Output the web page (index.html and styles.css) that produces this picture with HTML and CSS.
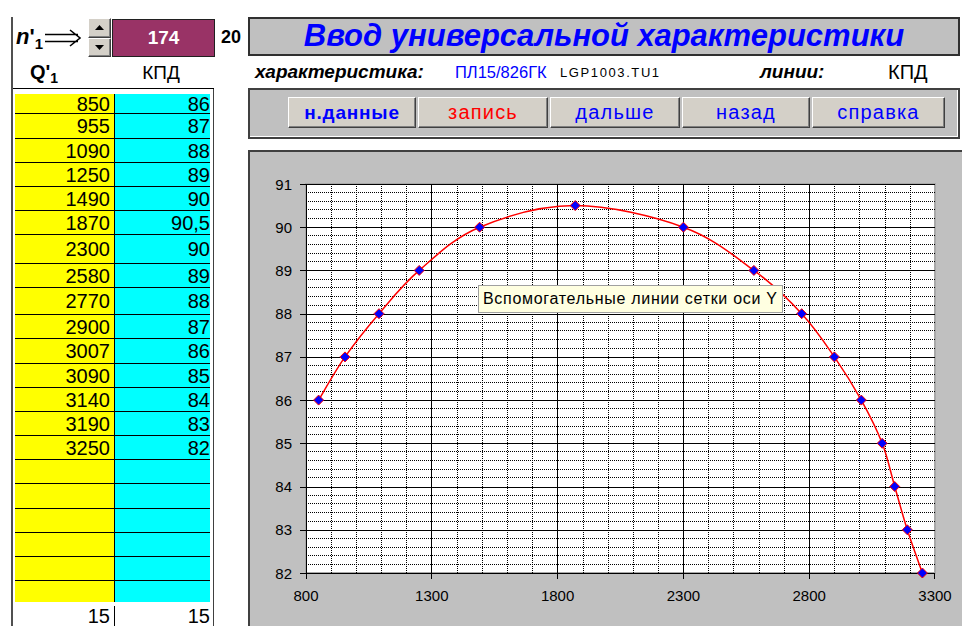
FILE: index.html
```html
<!DOCTYPE html>
<html lang="ru">
<head>
<meta charset="utf-8">
<title>Ввод универсальной характеристики</title>
<link rel="stylesheet" href="styles.css">
</head>
<body>
<div class="sheet">
  <div class="left">
    <div class="ctrl">
      <span class="nlabel"><b><i>n</i>'<sub>1</sub></b><svg class="arrow" width="37" height="18" viewBox="0 0 37 18"><path d="M0 5.5H33 M0 12.5H33 M25 1L35 9L25 17" fill="none" stroke="#000" stroke-width="1.6"/></svg></span>
      <div class="spin">
        <span class="spin-btn"><svg width="9" height="5" viewBox="0 0 9 5"><path d="M0 5 L4.5 0 L9 5 Z" fill="#000"/></svg></span>
        <span class="spin-btn"><svg width="9" height="5" viewBox="0 0 9 5"><path d="M0 0 L4.5 5 L9 0 Z" fill="#000"/></svg></span>
      </div>
      <div class="value">174</div>
      <span class="count">20</span>
    </div>
    <div class="panel">
      <div class="heads"><span class="hq">Q'<sub>1</sub></span><span class="hk">КПД</span></div>
      <div class="tablewrap">
        <div class="cells">
          <div class="q">850</div><div class="k">86</div>
          <div class="q">955</div><div class="k">87</div>
          <div class="q">1090</div><div class="k">88</div>
          <div class="q">1250</div><div class="k">89</div>
          <div class="q">1490</div><div class="k">90</div>
          <div class="q">1870</div><div class="k">90,5</div>
          <div class="q">2300</div><div class="k">90</div>
          <div class="q">2580</div><div class="k">89</div>
          <div class="q">2770</div><div class="k">88</div>
          <div class="q">2900</div><div class="k">87</div>
          <div class="q">3007</div><div class="k">86</div>
          <div class="q">3090</div><div class="k">85</div>
          <div class="q">3140</div><div class="k">84</div>
          <div class="q">3190</div><div class="k">83</div>
          <div class="q">3250</div><div class="k">82</div>
          <div class="q"></div><div class="k"></div>
          <div class="q"></div><div class="k"></div>
          <div class="q"></div><div class="k"></div>
          <div class="q"></div><div class="k"></div>
          <div class="q"></div><div class="k"></div>
          <div class="q last"></div><div class="k last"></div>
        </div>
        <div class="foot"><span class="fq">15</span><span class="fk">15</span></div>
      </div>
    </div>
  </div>

  <div class="right">
    <div class="title">Ввод универсальной характеристики</div>
    <div class="info">
      <span class="lbl">характеристика:</span>
      <span class="code">ПЛ15/826ГК</span>
      <span class="file">LGP1003.TU1</span>
      <span class="lbl">линии:</span>
      <span class="lines">КПД</span>
    </div>
    <div class="bar">
      <button class="btn btn-bold">н.данные</button>
      <button class="btn btn-red">запись</button>
      <button class="btn">дальше</button>
      <button class="btn">назад</button>
      <button class="btn">справка</button>
    </div>
    <div class="chart">
      <svg class="plot" width="718" height="478" viewBox="2 2 718 478">
        <defs>
          <path id="mk" d="M0 -5 L5 0 L0 5 L-5 0 Z" fill="#0000ff" stroke="#ff0000" stroke-width="1"/>
        </defs>
        <rect x="58" y="34" width="629" height="389" fill="#fff" stroke="#a8a8a8" stroke-width="2"/>
        <!-- minor grid: every 100 on X, every 0.2 on Y -->
        <path class="minor" d="M83.5 34V423 M108.5 34V423 M133.5 34V423 M158.5 34V423 M209.5 34V423 M234.5 34V423 M259.5 34V423 M284.5 34V423 M335.5 34V423 M360.5 34V423 M385.5 34V423 M410.5 34V423 M460.5 34V423 M485.5 34V423 M511.5 34V423 M536.5 34V423 M586.5 34V423 M611.5 34V423 M637.5 34V423 M662.5 34V423"/>
        <path class="minor" d="M58 414.5H687 M58 405.5H687 M58 397.5H687 M58 388.5H687 M58 371.5H687 M58 362.5H687 M58 353.5H687 M58 345.5H687 M58 327.5H687 M58 319.5H687 M58 310.5H687 M58 301.5H687 M58 284.5H687 M58 276.5H687 M58 267.5H687 M58 258.5H687 M58 241.5H687 M58 232.5H687 M58 224.5H687 M58 215.5H687 M58 198.5H687 M58 189.5H687 M58 180.5H687 M58 172.5H687 M58 155.5H687 M58 146.5H687 M58 137.5H687 M58 129.5H687 M58 111.5H687 M58 103.5H687 M58 94.5H687 M58 85.5H687 M58 68.5H687 M58 59.5H687 M58 51.5H687 M58 42.5H687"/>
        <!-- major grid -->
        <path class="major" d="M183.5 34V423 M309.5 34V423 M435.5 34V423 M561.5 34V423"/>
        <path class="major" d="M58 34.5H687 M58 77.5H687 M58 120.5H687 M58 164.5H687 M58 207.5H687 M58 250.5H687 M58 293.5H687 M58 337.5H687 M58 380.5H687"/>
        <!-- axes and ticks -->
        <path class="major" d="M58.5 34V423.5 M52 423.5H687"/>
        <path class="major" d="M52 34.5H58 M52 77.5H58 M52 120.5H58 M52 164.5H58 M52 207.5H58 M52 250.5H58 M52 293.5H58 M52 337.5H58 M52 380.5H58 M58.5 423V429 M183.5 423V429 M309.5 423V429 M435.5 423V429 M561.5 423V429 M686.5 423V429"/>
        <g class="ylab">
          <text x="44" y="39.5">91</text>
          <text x="44" y="82.7">90</text>
          <text x="44" y="125.9">89</text>
          <text x="44" y="169.2">88</text>
          <text x="44" y="212.4">87</text>
          <text x="44" y="255.6">86</text>
          <text x="44" y="298.8">85</text>
          <text x="44" y="342">84</text>
          <text x="44" y="385.3">83</text>
          <text x="44" y="428.5">82</text>
        </g>
        <g class="xlab">
          <text x="58" y="451">800</text>
          <text x="183.8" y="451">1300</text>
          <text x="309.6" y="451">1800</text>
          <text x="435.4" y="451">2300</text>
          <text x="561.2" y="451">2800</text>
          <text x="687" y="451">3300</text>
        </g>
        <!-- КПД curve, smoothed through the table points -->
        <path class="curve" d="M70.6 250.1 C75.0 242.9 86.9 221.3 97.0 206.9 C107.1 192.5 118.6 178.1 131.0 163.7 C143.4 149.3 154.4 134.8 171.2 120.4 C188.0 106.0 205.6 88.0 231.6 77.2 C257.6 66.4 293.2 55.6 327.2 55.6 C361.2 55.6 405.6 66.4 435.4 77.2 C465.2 88.0 486.2 106.0 505.9 120.4 C525.6 134.8 540.3 149.3 553.7 163.7 C567.1 178.1 576.5 192.5 586.4 206.9 C596.3 221.3 605.3 235.7 613.3 250.1 C621.3 264.5 628.6 278.9 634.2 293.3 C639.8 307.7 642.5 322.1 646.7 336.5 C650.9 350.9 654.7 365.4 659.3 379.8 C663.9 394.2 671.9 415.8 674.4 423.0"/>
        <use href="#mk" x="70.6" y="250.1"/>
        <use href="#mk" x="97.0" y="206.9"/>
        <use href="#mk" x="131.0" y="163.7"/>
        <use href="#mk" x="171.2" y="120.4"/>
        <use href="#mk" x="231.6" y="77.2"/>
        <use href="#mk" x="327.2" y="55.6"/>
        <use href="#mk" x="435.4" y="77.2"/>
        <use href="#mk" x="505.9" y="120.4"/>
        <use href="#mk" x="553.7" y="163.7"/>
        <use href="#mk" x="586.4" y="206.9"/>
        <use href="#mk" x="613.3" y="250.1"/>
        <use href="#mk" x="634.2" y="293.3"/>
        <use href="#mk" x="646.7" y="336.5"/>
        <use href="#mk" x="659.3" y="379.8"/>
        <use href="#mk" x="674.4" y="423.0"/>
      </svg>
      <div class="tip">Вспомогательные линии сетки оси Y</div>
    </div>
  </div>
</div>
</body>
</html>
```

FILE: styles.css
```css
* {
  box-sizing: border-box;
}

body {
  margin: 0;
  background: #fff;
  font-family: "Liberation Sans", Arial, sans-serif;
  color: #000;
  overflow: hidden;
}

.sheet {
  display: flex;
  width: 962px;
  height: 626px;
  padding-top: 17px;
  overflow: hidden;
}

/* ---------- left column: speed control and data table ---------- */

.left {
  flex: 0 0 237px;
  margin-left: 11px;
  border-left: 2px solid #505050;
}

.ctrl {
  display: flex;
  align-items: center;
  height: 41px;
}

.nlabel {
  display: flex;
  align-items: center;
  width: 73px;
  padding-left: 3px;
  font-size: 22px;
  white-space: nowrap;
}

.nlabel sub {
  font-size: 15px;
  vertical-align: -5px;
}

.nlabel .arrow {
  flex: none;
  margin-left: 2px;
}

.spin {
  display: flex;
  flex-direction: column;
  width: 23px;
  height: 39px;
  margin-left: 2px;
}

.spin-btn {
  flex: 1;
  display: flex;
  align-items: center;
  justify-content: center;
  background: #d4d0c8;
  border: 1px solid;
  border-color: #fff #404040 #404040 #fff;
  box-shadow: inset -1px -1px 0 #808080;
}

.value {
  width: 103px;
  height: 38px;
  margin-left: 1px;
  background: #993366;
  border: 1px solid #202020;
  color: #fff;
  font-size: 19px;
  font-weight: bold;
  line-height: 36px;
  text-align: center;
}

.count {
  margin-left: 6px;
  font-size: 18px;
  font-weight: bold;
}

.panel {
  width: 201px;
}

.heads {
  display: grid;
  grid-template-columns: 101px 100px;
  align-items: center;
  height: 31px;
  border-bottom: 1px solid #000;
}

.hq {
  padding-left: 17px;
  font-size: 20px;
  font-weight: bold;
}

.hq sub {
  font-size: 14px;
  vertical-align: -4px;
}

.hk {
  padding-right: 6px;
  text-align: center;
  font-size: 19px;
}

.tablewrap {
  height: 540px;
  padding: 5px 3px 0 2px;
  border-right: 1px solid #404040;
}

.cells {
  display: grid;
  grid-template-columns: 100px 95px;
  grid-template-rows: 20px 25px 24px 24px 24px 24px 29px 24px 27px 24px 25px 24px 24px 24px 24px 24px 25px 24px 24px 24px 21px;
}

.q,
.k {
  display: flex;
  align-items: center;
  justify-content: flex-end;
  border-bottom: 1px solid #000;
  font-size: 20px;
  line-height: 1;
}

.q {
  padding-right: 4px;
  background: #ffff00;
  border-right: 1px solid #000;
}

.k {
  padding-right: 0;
  background: #00ffff;
}

.q.last,
.k.last {
  border-bottom: 0;
}

.foot {
  display: grid;
  grid-template-columns: 100px 95px;
  height: 26px;
  padding-top: 4px;
  font-size: 20px;
  line-height: 20px;
}

.fq {
  padding-right: 4px;
  text-align: right;
  border-right: 1px solid #000;
}

.fk {
  text-align: right;
}

/* ---------- right column: title, info, buttons, chart ---------- */

.right {
  flex: 0 0 714px;
}

.title {
  width: 712px;
  height: 39px;
  background: #c0c0c0;
  border: 2px solid #303030;
  color: #0000ff;
  font-size: 31px;
  font-style: italic;
  font-weight: bold;
  line-height: 34px;
  text-align: center;
  white-space: nowrap;
}

.info {
  display: grid;
  grid-template-columns: 200px 105px 200px 128px auto;
  align-items: center;
  height: 32px;
  padding-left: 7px;
  white-space: nowrap;
}

.info .lbl {
  font-size: 19px;
  font-style: italic;
  font-weight: bold;
}

.info .code {
  color: #0000ff;
  font-size: 16.5px;
}

.info .file {
  font-size: 13px;
  letter-spacing: 1.6px;
}

.info .lines {
  font-size: 20px;
}

.bar {
  display: grid;
  grid-template-columns: 128px 130px 130px 128px 133px;
  grid-template-rows: 31px;
  column-gap: 2px;
  width: 712px;
  height: 51px;
  padding: 7px 0 0 38px;
  background: #c0c0c0;
  border: 2px solid #404040;
  box-shadow: inset -1px -1px 0 #fff;
}

.btn {
  margin: 0;
  padding: 0;
  background: #d4d0c8;
  border: 1px solid;
  border-color: #fff #404040 #404040 #fff;
  box-shadow: inset -1px -1px 0 #808080;
  color: #0000ff;
  font-family: "Liberation Sans", Arial, sans-serif;
  font-size: 20px;
  letter-spacing: 1.2px;
}

.btn-bold {
  font-size: 19px;
  font-weight: bold;
  letter-spacing: 0.8px;
}

.btn-red {
  color: #ff0000;
}

.chart {
  position: relative;
  width: 720px;
  height: 480px;
  margin-top: 11px;
  background: #c0c0c0;
  border-top: 2px solid #404040;
  border-left: 2px solid #404040;
}

.plot {
  display: block;
}

.minor {
  fill: none;
  stroke: #000;
  stroke-width: 1;
  stroke-dasharray: 1 1;
}

.major {
  fill: none;
  stroke: #000;
  stroke-width: 1;
}

.ylab text,
.xlab text {
  font-family: "Liberation Sans", Arial, sans-serif;
  font-size: 15px;
  fill: #000;
}

.ylab text {
  text-anchor: end;
}

.xlab text {
  text-anchor: middle;
}

.curve {
  fill: none;
  stroke: #ff0000;
  stroke-width: 1.5;
}

/* hover hint over the chart */
.tip {
  position: absolute;
  left: 228px;
  top: 133px;
  width: 305px;
  height: 28px;
  padding-left: 4px;
  background: #ffffe1;
  border: 1px solid #a0a0a0;
  font-size: 16px;
  letter-spacing: 0.7px;
  line-height: 26px;
  white-space: nowrap;
}
```
